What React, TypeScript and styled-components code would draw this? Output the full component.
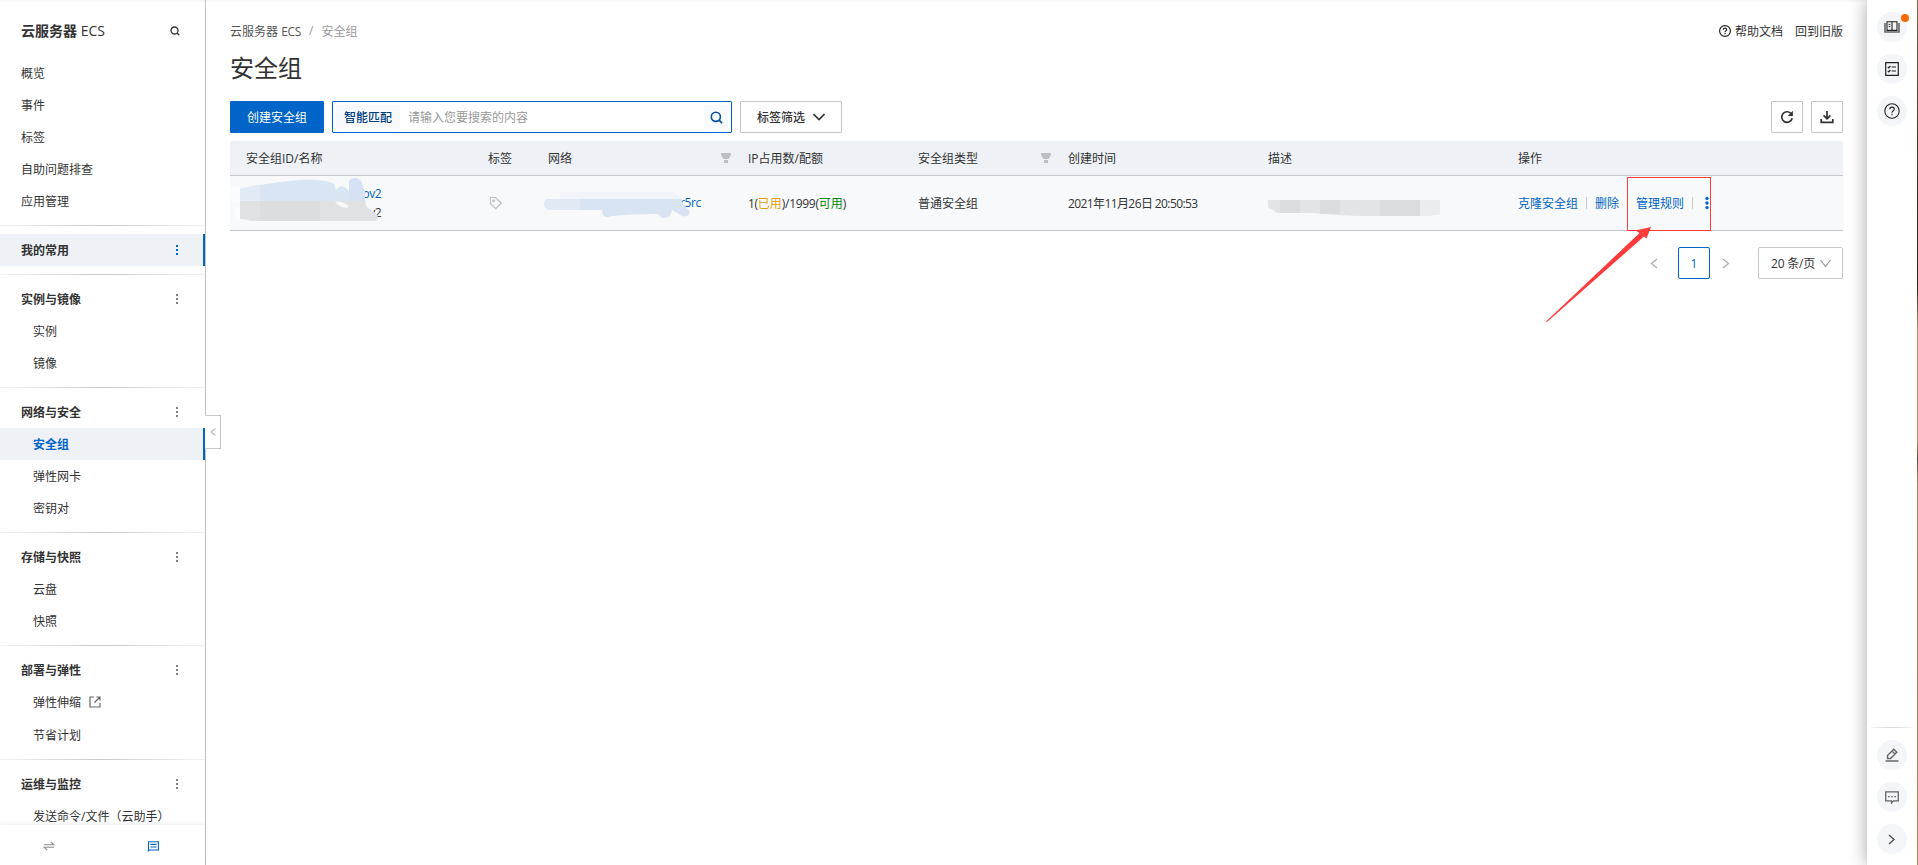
import React from "react";
import styled, { createGlobalStyle, css } from "styled-components";

const Global = createGlobalStyle`
  * { box-sizing: border-box; }
  html, body { margin: 0; padding: 0; overflow: hidden; }
  body {
    font-family: "Open Sans", "Noto Sans CJK SC", sans-serif;
    font-size: 12px;
    color: #333;
    background: #fff;
  }
  svg { display: block; flex: none; }
`;

const Page = styled.div`
  position: relative;
  display: flex;
  width: 1918px;
  height: 865px;
  overflow: hidden;
  background: linear-gradient(#f5f5f5, #fff 3px);
`;

/* ---------- side navigation ---------- */

const Sidebar = styled.nav`
  width: 206px;
  height: 865px;
  border-right: 1px solid #c1c1c1;
  display: flex;
  flex-direction: column;
  flex: none;
`;

const NavTitle = styled.div`
  height: 57px;
  padding: 3px 25px 0 21px;
  display: flex;
  align-items: center;
  justify-content: space-between;
  font-size: 14px;
  flex: none;
  b { font-weight: 700; }
  svg { margin-top: 1px; }
`;

const NavList = styled.div`
  flex: 1;
  min-height: 0;
  overflow: hidden;
`;

const NavItem = styled.div<{ $active?: boolean; $head?: boolean; $sub?: boolean; $tall?: boolean }>`
  height: ${(p) => (p.$tall ? 33 : 32)}px;
  padding: 0 25px 1px ${(p) => (p.$sub ? 33 : 21)}px;
  display: flex;
  align-items: center;
  font-weight: ${(p) => (p.$head || (p.$active && p.$sub) ? 700 : 400)};
  white-space: nowrap;
  ${(p) =>
    p.$active &&
    css`
      background: #eef2f7;
      border-right: 2px solid #0064c8;
      padding-right: 23px;
      color: ${p.$sub ? "#0064c8" : "#333"};
    `}
  svg { margin-left: ${(p) => (p.$head ? "auto" : "8px")}; }
`;

const Divider = styled.div`
  height: 1px;
  margin: 8px 0;
  background: linear-gradient(90deg, #f4f4f4, #c8c8c8 50%, #f4f4f4);
`;

const NavFooter = styled.div`
  height: 40px;
  flex: none;
  display: flex;
  align-items: center;
  padding: 2px 0 0 43px;
  gap: 92px;
  background: #fff;
  box-shadow: 0 -2px 4px rgba(0, 0, 0, 0.06);
  position: relative;
`;

const Collapse = styled.div`
  position: absolute;
  left: 205px;
  top: 415px;
  width: 16px;
  height: 34px;
  border: 1px solid #c6c6c6;
  border-left-color: #fff;
  background: #fff;
  display: flex;
  align-items: center;
  justify-content: center;
`;

/* ---------- main content ---------- */

const Main = styled.main`
  flex: 1;
  min-width: 0;
  padding: 20px 24px 0;
`;

const TopRow = styled.div`
  height: 22px;
  display: flex;
  align-items: center;
  justify-content: space-between;
`;

const Crumbs = styled.div`
  display: flex;
  color: #555;
  gap: 8px;
  i { font-style: normal; color: #999; }
`;

const TopLinks = styled.div`
  display: flex;
  gap: 12px;
  span { display: flex; align-items: center; gap: 4px; }
`;

const Heading = styled.h1`
  margin: 8px 0 0;
  height: 36px;
  line-height: 36px;
  font-size: 24px;
  font-weight: 400;
`;

const Toolbar = styled.div`
  margin-top: 15px;
  height: 32px;
  display: flex;
  align-items: center;
`;

const Button = styled.div<{ $primary?: boolean; $width: number; $left?: number }>`
  width: ${(p) => p.$width}px;
  height: 32px;
  margin-left: ${(p) => p.$left ?? 0}px;
  display: flex;
  align-items: center;
  justify-content: center;
  gap: 8px;
  border-radius: 1px;
  border: 1px solid ${(p) => (p.$primary ? "#0064c8" : "#c0c6cc")};
  background: ${(p) => (p.$primary ? "#0064c8" : "#fff")};
  color: ${(p) => (p.$primary ? "#fff" : "#333")};
  font-weight: ${(p) => (p.$primary ? 400 : 500)};
`;

const SearchBox = styled.div`
  width: 400px;
  height: 32px;
  margin-left: 8px;
  padding: 3px;
  border: 1px solid #0064c8;
  border-radius: 1px;
  display: flex;
  justify-content: space-between;
`;

const SearchMode = styled.span`
  width: 64px;
  height: 24px;
  display: flex;
  align-items: center;
  justify-content: center;
  background: #f7f9fc;
  color: #00407f;
  font-weight: 500;
`;

const Placeholder = styled.span`
  flex: 1;
  padding-left: 8px;
  line-height: 26px;
  color: #999;
`;

const SearchIconBox = styled.span`
  width: 24px;
  display: flex;
  align-items: center;
  justify-content: center;
  background: #f7f9fc;
`;

const Spacer = styled.div`flex: 1;`;

const columns = "242px 60px 200px 170px 150px 200px 250px 1fr";

const TableHead = styled.div`
  margin-top: 8px;
  height: 35px;
  display: grid;
  grid-template-columns: ${columns};
  align-items: center;
  background: #eef1f6;
  border-bottom: 1px solid #c4c6c9;
  border-radius: 2px 2px 0 0;
`;

const TableRow = styled(TableHead)`
  margin-top: 0;
  height: 55px;
  background: #f8f9fb;
  border-radius: 0;
  padding-bottom: 1px;
`;

const Cell = styled.div`
  position: relative;
  padding: 0 1px 0 16px;
  display: flex;
  align-items: center;
  justify-content: space-between;
  white-space: nowrap;
`;

const Stack = styled.div`
  display: flex;
  flex-direction: column;
  align-items: flex-end;
  line-height: 19px;
  width: 135px;
`;

const Value = styled.span<{ $color?: string; $ls?: number }>`
  color: ${(p) => p.$color ?? "inherit"};
  letter-spacing: ${(p) => p.$ls ?? 0}px;
`;

const NetworkValue = styled(Value)`
  padding-left: 132px;
`;

const Smudge = styled.svg<{ $x: number; $y: number }>`
  position: absolute;
  left: ${(p) => p.$x}px;
  top: ${(p) => p.$y}px;
`;

const Actions = styled.div`
  display: flex;
  align-items: center;
  color: #0064c8;
`;

const Bar = styled.i`
  width: 1px;
  height: 12px;
  margin: 0 8px;
  background: #c8c8c8;
`;

const Pager = styled.div`
  margin-top: 16px;
  height: 32px;
  display: flex;
  align-items: center;
  justify-content: flex-end;
`;

const PageNo = styled.div`
  width: 32px;
  height: 32px;
  margin: 0 12px 0 20px;
  border: 1px solid #0064c8;
  border-radius: 2px;
  color: #0064c8;
  display: flex;
  align-items: center;
  justify-content: center;
`;

const PageSize = styled.div`
  width: 85px;
  height: 32px;
  margin-left: 28px;
  padding: 0 11px 0 12px;
  border: 1px solid #c4c6c9;
  border-radius: 2px;
  display: flex;
  align-items: center;
  justify-content: space-between;
`;

/* ---------- right rail ---------- */

const Rail = styled.aside`
  width: 50px;
  height: 865px;
  flex: none;
  background: #fff;
  box-shadow: -1px 0 18px rgba(0, 0, 0, 0.32);
  display: flex;
  flex-direction: column;
  align-items: center;
  padding: 12px 0 11px;
  gap: 12px;
`;

const ScreenEdge = styled.div`
  width: 1px;
  height: 865px;
  flex: none;
  position: relative;
  background: linear-gradient(#7d6a45, #4a3c22 15%, #2e2412 33%, #b8934e 38%, #b8934e 51%, #5a4a3a 53%, #b08a48 56%, #a8824a 80%, #c08a4a);
`;

const Round = styled.div`
  position: relative;
  width: 30px;
  height: 30px;
  border-radius: 50%;
  background: #f4f5f8;
  display: flex;
  align-items: center;
  justify-content: center;
  flex: none;
`;

const Dot = styled.i`
  position: absolute;
  width: 8px;
  height: 8px;
  right: -2px;
  top: 2px;
  border-radius: 50%;
  background: #ff6a00;
`;

const RailLine = styled.div`
  width: 42px;
  height: 1px;
  background: linear-gradient(90deg, #f2f2f2, #d8d8d8 50%, #f2f2f2);
`;

const Annotation = styled.svg`
  position: absolute;
  left: 1540px;
  top: 170px;
`;

/* ---------- icons ---------- */

const Dots = ({ color = "#808080" }: { color?: string }) => (
  <svg width="6" height="12" viewBox="0 0 6 12" fill={color}>
    <rect x="2" y="1" width="2" height="2" />
    <rect x="2" y="5" width="2" height="2" />
    <rect x="2" y="9" width="2" height="2" />
  </svg>
);

const MoreActions = () => (
  <svg width="12" height="14" viewBox="0 0 12 14" fill="#0064c8">
    <circle cx="6" cy="2.4" r="1.7" />
    <circle cx="6" cy="7" r="1.7" />
    <circle cx="6" cy="11.6" r="1.7" />
  </svg>
);

const Magnifier = ({ size, color, w }: { size: number; color: string; w: number }) => (
  <svg width={size} height={size} viewBox="0 0 14 14" fill="none" stroke={color} strokeWidth={w}>
    <circle cx="6.3" cy="6.3" r="4.9" />
    <path d="M9.8 9.8L13 13" />
  </svg>
);

const Chevron = ({ d, w, h, color, sw = 1.2 }: { d: string; w: number; h: number; color: string; sw?: number }) => (
  <svg width={w} height={h} viewBox={`0 0 ${w} ${h}`} fill="none" stroke={color} strokeWidth={sw}>
    <path d={d} />
  </svg>
);

const Funnel = () => (
  <svg width="10" height="10" viewBox="0 0 10 10" fill="#bdbfc2">
    <path d="M0 0H10V2L7.5 6H2.5L0 2ZM3 7H7V10H3Z" />
  </svg>
);

const Question = ({ size, sw }: { size: number; sw: number }) => (
  <svg width={size} height={size} viewBox="0 0 16 16" fill="none" stroke="#222" strokeWidth={sw}>
    <circle cx="8" cy="8" r="7.2" />
    <path d="M5.8 6.3C5.8 3.4 10.3 3.5 10.3 6.2C10.3 7.8 8 7.8 8 9.8" />
    <path d="M8 10.8V12.2" />
  </svg>
);

const sections = [
  { title: "实例与镜像", items: ["实例", "镜像"] },
  { title: "网络与安全", items: ["安全组", "弹性网卡", "密钥对"] },
  { title: "存储与快照", items: ["云盘", "快照"] },
  { title: "部署与弹性", items: ["弹性伸缩", "节省计划"] },
  { title: "运维与监控", items: ["发送命令/文件（云助手）"] },
];

function Navigation() {
  return (
    <Sidebar>
      <NavTitle>
        <span><b>云服务器</b> <Value>ECS</Value></span>
        <Magnifier size={10} color="#333" w={1.8} />
      </NavTitle>
      <NavList>
        {["概览", "事件", "标签", "自助问题排查", "应用管理"].map((t) => (
          <NavItem key={t}>{t}</NavItem>
        ))}
        <Divider />
        <NavItem $head $active>我的常用<Dots color="#0064c8" /></NavItem>
        {sections.map((s) => (
          <React.Fragment key={s.title}>
            <Divider />
            <NavItem $head>{s.title}<Dots /></NavItem>
            {s.items.map((t) => (
              <NavItem key={t} $sub $active={t === "安全组"} $tall={t === "弹性伸缩"}>
                {t}
                {t === "弹性伸缩" && (
                  <svg width="12" height="12" viewBox="0 0 12 12" fill="none" stroke="#666" strokeWidth="1.2">
                    <path d="M5 1H1V11H11V7M7.5 1H11V4.5M11 1L5.5 6.5" />
                  </svg>
                )}
              </NavItem>
            ))}
          </React.Fragment>
        ))}
      </NavList>
      <NavFooter>
        <svg width="12" height="10" viewBox="0 0 12 10" fill="none" stroke="#8c8c8c" strokeWidth="1.1">
          <path d="M1 3.8H11L7.8 0.8M11 6.2H1L4.2 9.2" />
        </svg>
        <svg width="12" height="11" viewBox="0 0 12 11" fill="none" stroke="#0064c8" strokeWidth="1.1">
          <path d="M1.5 10.2V0.7H11.4V9H2.6L0.8 10.4M3.4 3.4H9.6M3.4 6H9.6" />
        </svg>
      </NavFooter>
    </Sidebar>
  );
}

function SecurityGroups() {
  return (
    <Main>
      <TopRow>
        <Crumbs>
          <span>云服务器 <Value $ls={-0.3}>ECS</Value></span><i>/</i><i>安全组</i>
        </Crumbs>
        <TopLinks>
          <span><Question size={12} sw={1.6} />帮助文档</span>
          <span>回到旧版</span>
        </TopLinks>
      </TopRow>
      <Heading>安全组</Heading>
      <Toolbar>
        <Button $primary $width={94}>创建安全组</Button>
        <SearchBox>
          <SearchMode>智能匹配</SearchMode>
          <Placeholder>请输入您要搜索的内容</Placeholder>
          <SearchIconBox><Magnifier size={13} color="#00509f" w={1.7} /></SearchIconBox>
        </SearchBox>
        <Button $width={102} $left={8}>
          标签筛选
          <Chevron d="M0.5 1L6 6.5L11.5 1" w={12} h={8} color="#333" sw={1.6} />
        </Button>
        <Spacer />
        <Button $width={32}>
          <svg width="14" height="14" viewBox="0 0 14 14" fill="none" stroke="#333" strokeWidth="1.7">
            <path d="M12.2 8.3A5.3 5.3 0 1 1 10.9 3.4" />
            <path d="M12.9 0.8V6H7.7Z" fill="#333" stroke="none" />
          </svg>
        </Button>
        <Button $width={32} $left={8}>
          <svg width="14" height="14" viewBox="0 0 14 14" fill="none" stroke="#333" strokeWidth="1.7">
            <path d="M7 1V8.5M3.6 5.4L7 8.8L10.4 5.4M1.2 9V12.3H12.8V9" />
          </svg>
        </Button>
      </Toolbar>

      <TableHead>
        <Cell>安全组ID/名称</Cell>
        <Cell>标签</Cell>
        <Cell>网络<Funnel /></Cell>
        <Cell>IP占用数/配额</Cell>
        <Cell>安全组类型<Funnel /></Cell>
        <Cell>创建时间</Cell>
        <Cell>描述</Cell>
        <Cell>操作</Cell>
      </TableHead>
      <TableRow>
        <Cell>
          <Stack>
            <Value $color="#0064c8" $ls={-0.5}>ov2</Value>
            <Value $ls={-0.5}>v2</Value>
          </Stack>
          <Smudge $x={0} $y={-6} width="150" height="46" viewBox="0 0 150 46">
            <path d="M0 12Q4 6 10 10V24H2Q-2 18 0 12M4 33Q6 26 12 30V41Q3 42 4 33" fill="#fbfcfd" />
            <path d="M10 11Q40 4 70 2Q95 1 104 6L106 12Q112 4 119 13V3Q124-3 131 3L135 14V24H10Z" fill="#d9e5f3" />
            <path d="M10 11L30 6.5V23H10Z" fill="#e2eaf5" />
            <path d="M119 13V3Q124-3 131 3L135 14V23H119Z" fill="#d6e1f3" />
            <path d="M10 23H135Q136 30 141 32Q148 36 148 40L146 43H20Q18 41 10 41Z" fill="#dfe1e3" />
            <path d="M30 23H90V43H30Z" fill="#dcddde" />
            <path d="M105 23Q114 24 119 28L117 30Q108 29 105 23" fill="#f8f9fb" />
          </Smudge>
        </Cell>
        <Cell>
          <svg width="14" height="14" viewBox="0 0 14 14" fill="none" stroke="#bcbec1" strokeWidth="1.2">
            <path d="M2.5 1.5H7.5L13.3 7L7.8 12.6L2.5 7.5Z" />
            <circle cx="5.6" cy="4.8" r="0.8" />
          </svg>
        </Cell>
        <Cell>
          <NetworkValue $color="#0064c8" $ls={-0.4}>r5rc</NetworkValue>
          <Smudge $x={10} $y={-4} width="150" height="30" viewBox="0 0 150 30">
            <path d="M18 2H132L140 9V12H18Z" fill="#f1f4f8" />
            <path d="M5 9H140Q139 15 147 20Q149 28 140 26L130 20Q129 29 120 28L116 24Q90 24 70 26Q60 30 60 20Q30 20 6 20Q-2 14 5 9" fill="#d9e4f2" />
            <path d="M5 9H38V20H6Q-2 14 5 9" fill="#e1e9f5" />
          </Smudge>
        </Cell>
        <Cell>
          <Value $ls={-0.3}>1(<Value $color="#e6a000">已用</Value>)/1999(<Value $color="#008a00">可用</Value>)</Value>
        </Cell>
        <Cell>普通安全组</Cell>
        <Cell><Value $ls={-0.6}>2021年11月26日 20:50:53</Value></Cell>
        <Cell>
          <Smudge $x={16} $y={-3} width="173" height="17" viewBox="0 0 173 17">
            <path d="M0 0H172V14L158 16H90L70 15L44 13H9L0 7Z" fill="#e3e4e6" />
            <path d="M12 0H32V13H12ZM52 0H72V14H52ZM112 0H152V16H112Z" fill="#dbdcdf" />
            <path d="M152 0H172V14L158 16H152Z" fill="#ebecee" />
          </Smudge>
        </Cell>
        <Cell>
          <Actions>
            克隆安全组<Bar />删除<Bar />管理规则<Bar /><MoreActions />
          </Actions>
        </Cell>
      </TableRow>

      <Pager>
        <Chevron d="M7 1L1.5 5.5L7 10" w={8} h={11} color="#aaa" />
        <PageNo>1</PageNo>
        <Chevron d="M1 1L6.5 5.5L1 10" w={8} h={11} color="#aaa" />
        <PageSize>
          <Value $ls={-0.2}>20 条/页</Value>
          <Chevron d="M0.5 1L5.5 7.5L10.5 1" w={11} h={9} color="#999" />
        </PageSize>
      </Pager>
    </Main>
  );
}

function ToolRail() {
  return (
    <Rail>
      <Round>
        <svg width="16" height="12" viewBox="0 0 16 12" fill="none" stroke="#222" strokeWidth="1.1">
          <path d="M1 2V11H15V2" stroke="#666" strokeWidth="1.6" />
          <path d="M3 0.8H13V9.4H3ZM8 0.8V10" fill="#f4f5f8" />
          <path d="M4.6 3.4H6.4M4.6 5.6H6.4" strokeWidth="0.9" />
        </svg>
        <Dot />
      </Round>
      <Round>
        <svg width="14" height="14" viewBox="0 0 14 14" fill="none" stroke="#222" strokeWidth="1.2">
          <path d="M0.7 0.7H13.3V13.3H0.7ZM6.6 5H11M6.6 9H11M2.8 4.8L3.8 5.8L5.4 4M2.8 8.8L3.8 9.8L5.4 8" />
        </svg>
      </Round>
      <Round><Question size={16} sw={1.1} /></Round>
      <Spacer />
      <RailLine />
      <Round>
        <svg width="14" height="14" viewBox="0 0 14 14" fill="none" stroke="#666" strokeWidth="1.4">
          <path d="M0.5 13H13.5M2.5 10.5V7.5L8.8 1.2L11.8 4.2L5.5 10.5ZM7 3L10 6" />
        </svg>
      </Round>
      <Round>
        <svg width="14" height="13" viewBox="0 0 14 13" fill="none" stroke="#666" strokeWidth="1.3">
          <path d="M0.7 0.8H13.3V9.8H8.5L6.5 12L6.5 9.8H0.7ZM3 5.6H4.6M6.2 5.6H7.8M9.4 5.6H11" />
        </svg>
      </Round>
      <Round><Chevron d="M1 1L6 5.5L1 10" w={8} h={11} color="#555" sw={1.5} /></Round>
    </Rail>
  );
}

export default function App() {
  return (
    <>
      <Global />
      <Page>
        <Navigation />
        <SecurityGroups />
        <ToolRail />
        <ScreenEdge />
        <Collapse><Chevron d="M5.5 0.5L1 4L5.5 7.5" w={6} h={8} color="#bbb" /></Collapse>
        <Annotation width="180" height="160" viewBox="0 0 180 160">
          <rect x="87.5" y="7.5" width="83" height="53" fill="none" stroke="#ff3b3b" />
          <path d="M6 151.5L99.5 63L95.5 60.5L111 57L106.5 68.5L104 66.5L7 152Z" fill="#ff3b3b" />
        </Annotation>
      </Page>
    </>
  );
}
